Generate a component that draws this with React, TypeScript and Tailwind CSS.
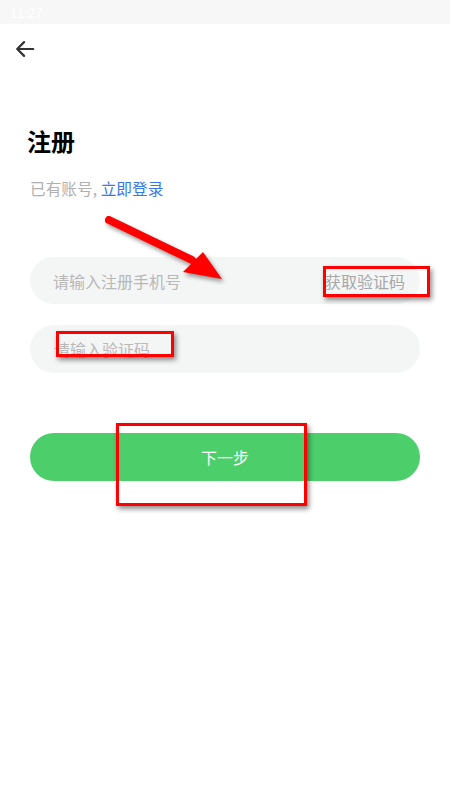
import React from "react";

const font = { fontFamily: '"Noto Sans CJK SC", "Noto Sans", sans-serif' };

function RedBox({ className }: { className: string }) {
  return (
    <div
      className={`absolute border-[3px] border-[#ff0000] shadow-[2px_3px_5px_rgba(0,0,0,0.45)] ${className}`}
    />
  );
}

export default function App() {
  return (
    <div className="relative w-[450px] h-[800px] bg-white overflow-hidden" style={font}>
      <div className="h-6 bg-[#f7f7f7] flex items-center px-[10px]">
        <span className="text-[13px] text-white leading-none">11:27</span>
      </div>
      <div className="h-[50px] flex items-center pl-[14px]">
        <svg width="22" height="22" viewBox="0 0 24 24" fill="none" stroke="#333" strokeWidth="2.4" strokeLinecap="round" strokeLinejoin="round">
          <path d="M21 12H3.5M11 4.5 3.5 12l7.5 7.5" />
        </svg>
      </div>
      <div className="pl-[27px] pt-[52px]">
        <h1 className="text-[24px] font-bold text-black leading-[30px]">注册</h1>
        <p className="mt-[21px] pl-[3px] text-[15.7px] leading-[24px] text-[#b0b0b0]">
          已有账号, <span className="text-[#3a78e8]">立即登录</span>
        </p>
      </div>
      <div className="px-[30px] mt-[56px] flex flex-col">
        <div className="h-[47px] rounded-full bg-[#f4f5f5] flex items-center justify-between pl-[23px] pr-[15px]">
          <span className="text-[16px] text-[#b8b8b8]">请输入注册手机号</span>
          <span className="text-[16px] text-[#a8a8a8]">获取验证码</span>
        </div>
        <div className="mt-[21px] h-[48px] rounded-full bg-[#f4f5f5] flex items-center pl-[24px]">
          <span className="text-[16px] text-[#b8b8b8]">请输入验证码</span>
        </div>
        <button className="mt-[60px] h-[48px] rounded-full bg-[#4ccf6b] text-white text-[16px] flex items-center justify-center">
          下一步
        </button>
      </div>

      <svg className="absolute left-0 top-0" width="450" height="800" style={{ filter: "drop-shadow(2px 3px 2px rgba(0,0,0,0.4))" }}>
        <line x1="109" y1="220" x2="192" y2="260" stroke="#ff0000" strokeWidth="8" strokeLinecap="round" />
        <polygon points="222,279 183,272 203,252" fill="#ff0000" />
      </svg>

      <RedBox className="left-[323px] top-[266px] w-[107px] h-[31px]" />
      <RedBox className="left-[56px] top-[331px] w-[118px] h-[26px]" />
      <RedBox className="left-[116px] top-[423px] w-[191px] h-[83px]" />
    </div>
  );
}
